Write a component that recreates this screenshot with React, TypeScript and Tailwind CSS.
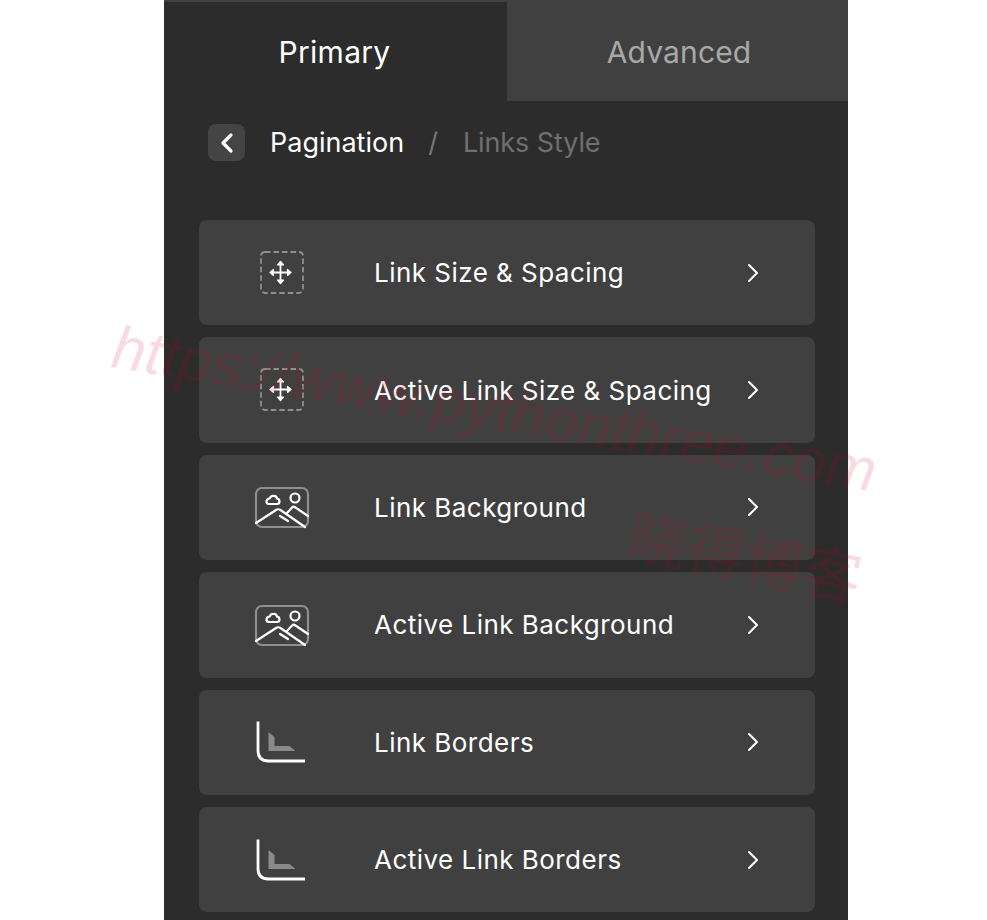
import React from 'react';
import { ChevronRight, ChevronLeft } from 'lucide-react';

const MoveIcon: React.FC = () => (
  <svg width="44" height="44" viewBox="0 0 44 44" fill="none">
    <rect x="1" y="1" width="42" height="41" rx="4" stroke="#8f8f8f" strokeWidth="1.800" strokeDasharray="5.500 3" />
    <path d="M20.500 12v20M11 21.500h19" stroke="#fff" strokeWidth="1.800" />
    <path d="M20.500 10.500l-3 3.500h6zM20.500 32.500l-3-3.500h6zM10 21.500l3.500-3v6zM31 21.500l-3.500-3v6z" fill="#fff" stroke="#fff" strokeWidth="1.200" strokeLinejoin="round" />
  </svg>
);

const ImageIcon: React.FC = () => (
  <svg width="56" height="44" viewBox="0 0 56 44" fill="none">
    <rect x="2" y="3" width="52" height="39" rx="6" stroke="#8f8f8f" strokeWidth="2.200" />
    <path d="M2 38l20-13q2-1.500 4.500 0L51 42" stroke="#fff" strokeWidth="2.200" strokeLinecap="round" />
    <path d="M33 28l5-5.500q1.500-1.500 3.500 0L54 31" stroke="#fff" strokeWidth="2.200" strokeLinecap="round" />
    <path d="M26 31l8 5" stroke="#fff" strokeWidth="2.200" strokeLinecap="round" />
    <circle cx="41" cy="13" r="4.500" stroke="#fff" strokeWidth="2.200" />
    <path d="M15 19q-2.500 0-2.500-2.500t3-3q1.500-3 4-2.500 2.500-.500 3.500 2.500 2.500.500 2.500 3T23 19z" stroke="#fff" strokeWidth="2.200" />
  </svg>
);

const BorderIcon: React.FC = () => (
  <svg width="52" height="44" viewBox="0 0 52 44" fill="none" className="-ml-[2px]">
    <path d="M3 1.500v29q0 10.500 10.500 10.500H50" stroke="#fff" strokeWidth="2.800" />
    <path d="M13.500 12l6 5v9h15l6 5h-27z" fill="#8a8a8a" />
  </svg>
);

const rows = [
  { label: 'Link Size & Spacing', icon: <MoveIcon /> },
  { label: 'Active Link Size & Spacing', icon: <MoveIcon /> },
  { label: 'Link Background', icon: <ImageIcon /> },
  { label: 'Active Link Background', icon: <ImageIcon /> },
  { label: 'Link Borders', icon: <BorderIcon /> },
  { label: 'Active Link Borders', icon: <BorderIcon /> },
];

const App: React.FC = () => {
  return (
    <div className="relative w-[987px] h-[920px] bg-white overflow-hidden font-['Inter',sans-serif]">
      <div className="ml-[164px] w-[684px] h-[920px] bg-[#2c2c2c] border-t-2 border-[#404040]">
        <div className="flex h-[99px]">
          <div className="w-[343px] flex items-center justify-center text-[30px] tracking-[0.3px] text-white pt-[2px] pr-[2px]">Primary</div>
          <div className="flex-1 flex items-center justify-center bg-[#404040] text-[30px] tracking-[0.15px] text-[#a8a8a8] pt-[2px] pl-[3px]">Advanced</div>
        </div>
        <div className="flex items-center h-[37px] mt-[23px] pl-[44px]">
          <div className="w-[37px] h-[37px] rounded-lg bg-[#444444] flex items-center justify-center">
            <ChevronLeft size={32} strokeWidth={2.400} className="text-white" />
          </div>
          <span className="ml-[25px] text-[27px] text-white translate-y-[1px]">Pagination</span>
          <span className="ml-[24px] text-[27px] text-[#777777] translate-y-[1px]">/</span>
          <span className="ml-[25px] text-[27px] tracking-[-0.1px] text-[#6f6f6f] translate-y-[1px]">Links Style</span>
        </div>
        <div className="flex flex-col gap-[12px] mt-[59px] ml-[35px] w-[616px]">
          {rows.map((row) => (
            <div key={row.label} className="flex items-center h-[105.400px] shrink-0 rounded-lg bg-[#404040]">
              <div className="w-[165px] flex justify-center">{row.icon}</div>
              <span className="ml-[10px] flex-1 text-[26px] tracking-[0.47px] text-white">{row.label}</span>
              <ChevronRight size={32} strokeWidth={1.500} className="text-white mr-[46px]" />
            </div>
          ))}
        </div>
      </div>
      {/* watermark */}
      <div className="absolute left-[113px] top-[317px] origin-left rotate-[9.300deg] text-[60px] tracking-[0.1px] leading-none italic whitespace-nowrap text-[#d00020]/[0.14] font-['Liberation_Sans',sans-serif]">
        https://www.pythonthree.com
      </div>
      <div className="absolute left-[630px] top-[502px] origin-left rotate-[11deg] text-[59px] leading-none whitespace-nowrap text-[#d00020]/[0.14] font-['Noto_Sans_CJK_SC',sans-serif]">
        晓得博客
      </div>
    </div>
  );
};

export default App;
